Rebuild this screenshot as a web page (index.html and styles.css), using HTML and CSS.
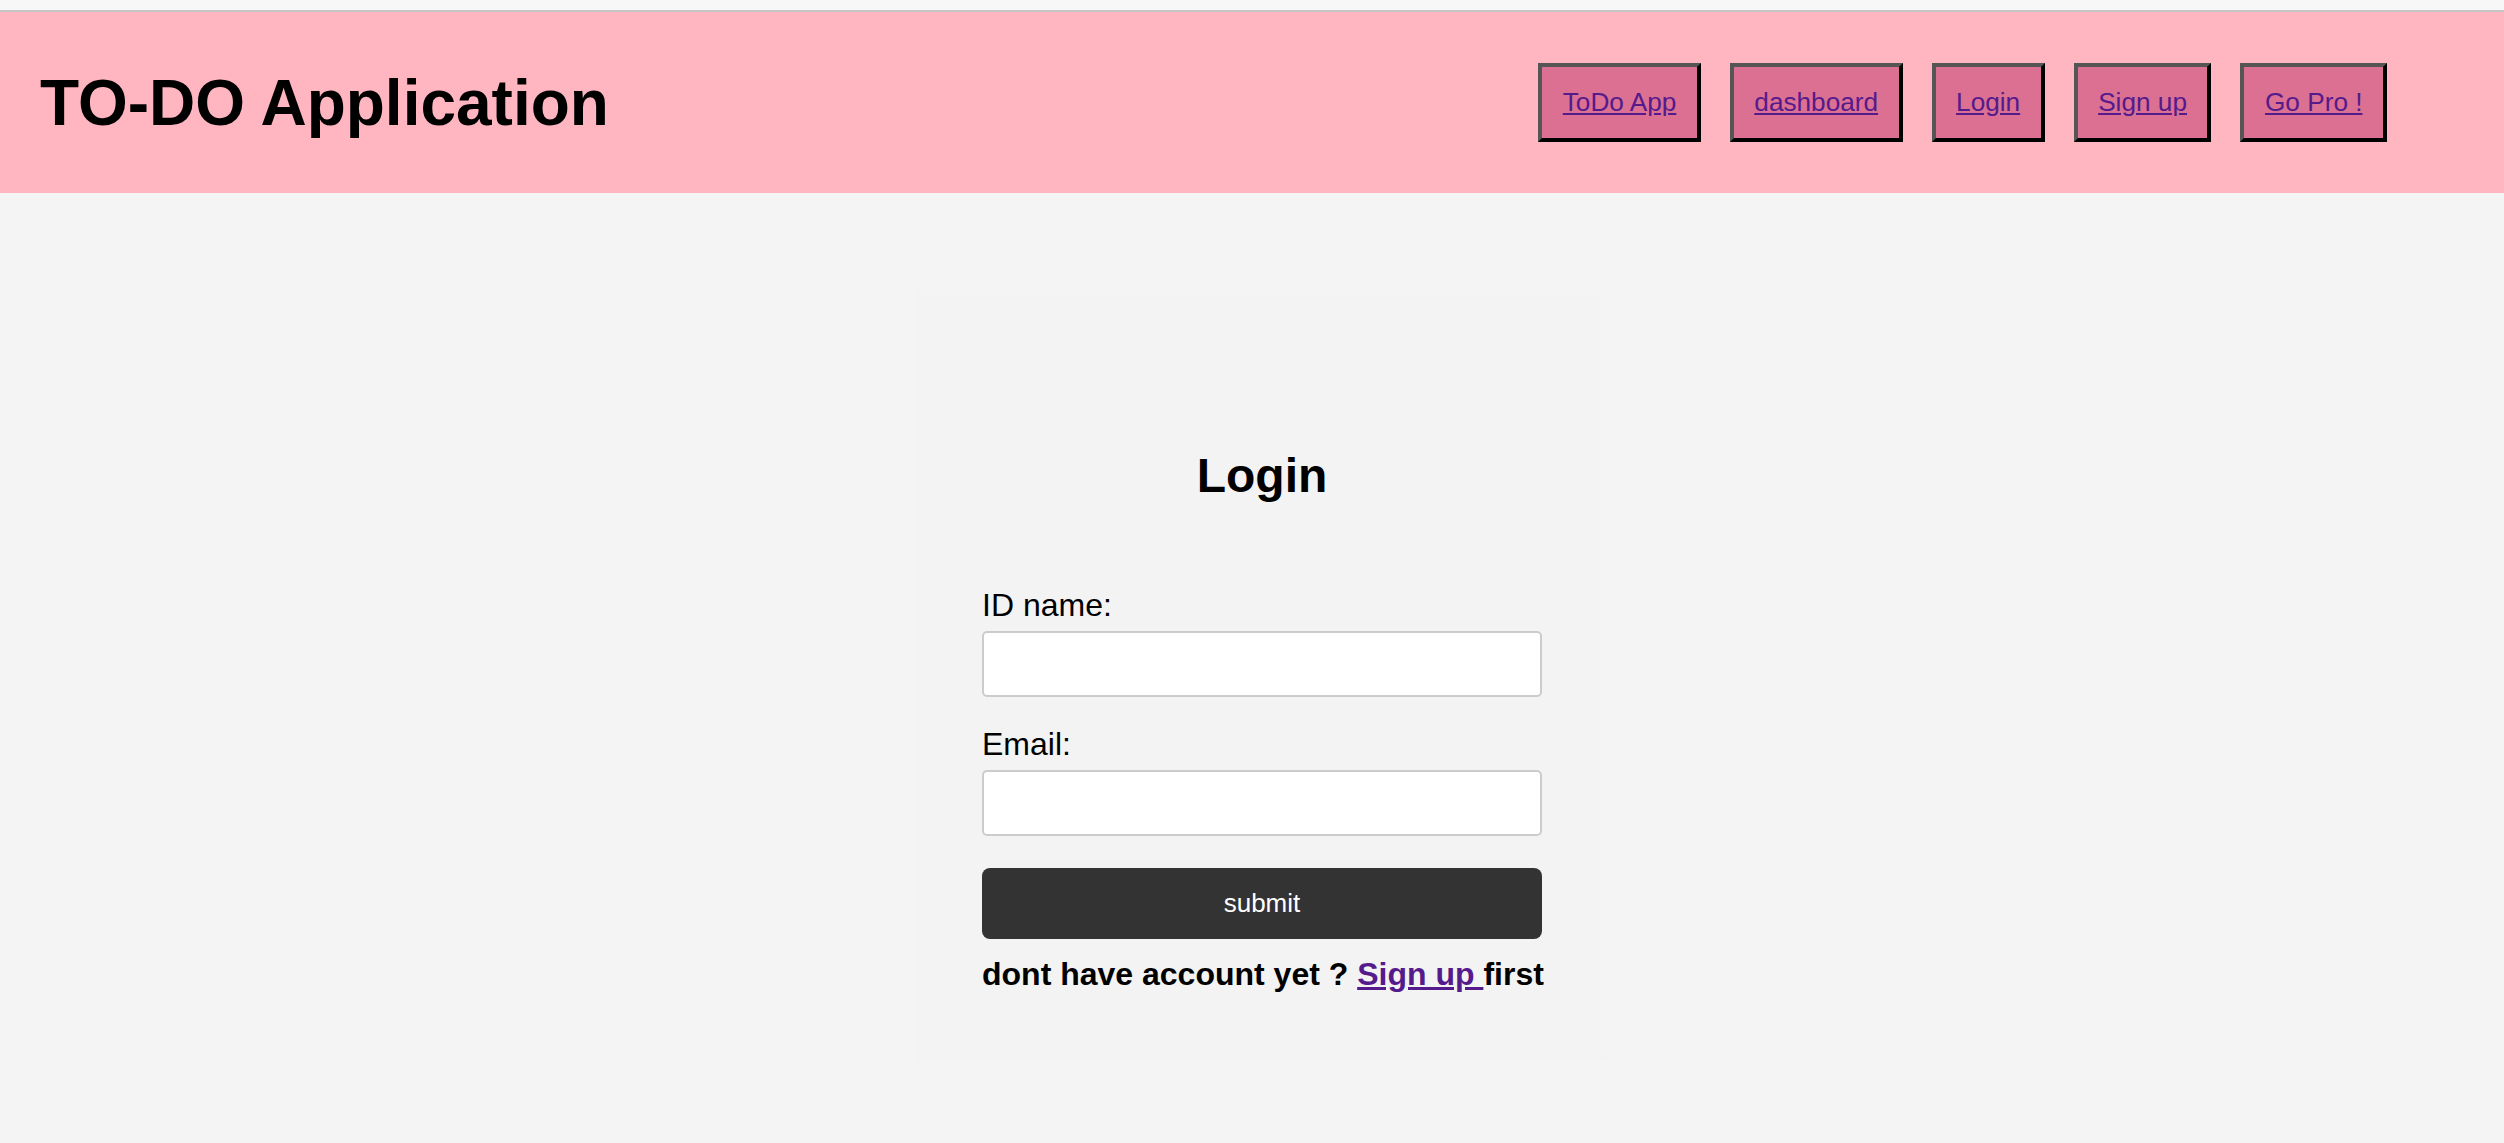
FILE: index.html
```html
<!DOCTYPE html>
<html lang="en">
<head>
<meta charset="utf-8">
<title>TO-DO Application</title>
<link rel="stylesheet" href="styles.css">
</head>
<body>
<div class="topstrip"></div>
<header class="header">
  <h1 class="brand">TO-DO Application</h1>
  <nav class="nav">
    <a class="nav-link" href="#">ToDo App</a>
    <a class="nav-link" href="#">dashboard</a>
    <a class="nav-link" href="#">Login</a>
    <a class="nav-link" href="#">Sign up</a>
    <a class="nav-link" href="#">Go Pro !</a>
  </nav>
</header>
<main class="main">
  <form class="card">
    <h2 class="card-title">Login</h2>
    <label class="label label-first" for="idname">ID name:</label>
    <input class="field" id="idname" type="text">
    <label class="label" for="email">Email:</label>
    <input class="field" id="email" type="email">
    <button class="submit" type="button">submit</button>
    <p class="note">dont have account yet ? <a class="note-link" href="#">Sign up </a>first</p>
  </form>
</main>
</body>
</html>
```

FILE: styles.css
```css
html, body {
  margin: 0;
  padding: 0;
}
body {
  background: #f4f4f4;
  font-family: "Liberation Sans", Arial, sans-serif;
  color: #000;
  min-height: 1143px;
}
.topstrip {
  height: 10px;
  background: #f7f7f7;
  border-bottom: 2px solid #c6c6c6;
}
.header {
  height: 181px;
  background: #ffb6c1;
  display: flex;
  align-items: center;
  justify-content: space-between;
  padding: 0 117px 0 40px;
}
.brand {
  margin: 0;
  font-size: 64px;
  font-weight: bold;
  line-height: 74px;
}
.nav {
  display: flex;
  gap: 29px;
  align-items: center;
}
.nav-link {
  display: block;
  background: #db7093;
  color: #551a8b;
  font-size: 26.2px;
  line-height: 31px;
  padding: 20px 20.5px;
  border-style: solid;
  border-width: 4px;
  border-color: #555 #000 #000 #555;
}
.main {
  display: flex;
  padding: 97px 0 0 918px;
}
.card {
  height: 770px;
  box-sizing: border-box;
  width: 688px;
  padding: 0 64px;
  background: #f3f3f3;
  box-shadow: 0 0 3px rgba(0, 0, 0, 0.02);
  display: flex;
  flex-direction: column;
}
.card-title {
  margin: 158px 0 0;
  text-align: center;
  font-size: 48px;
  line-height: 55px;
  font-weight: bold;
}
.label {
  font-size: 32px;
  line-height: 37px;
  margin-top: 29px;
}
.label-first {
  margin-top: 84px;
}
.field {
  margin-top: 7px;
  height: 66px;
  box-sizing: border-box;
  border: 2px solid #cccccc;
  border-radius: 5px;
  background: #fff;
  padding: 0 12px;
  font-size: 26px;
  font-family: inherit;
}
.field + .label {
  margin-top: 29px;
}
.submit {
  margin-top: 32px;
  height: 71px;
  border: 0;
  border-radius: 8px;
  background: #333333;
  color: #fff;
  font-family: "Liberation Sans", Arial, sans-serif;
  font-size: 26px;
}
.note {
  margin: 17px 0 0;
  font-size: 32px;
  line-height: 37px;
  font-weight: bold;
  white-space: nowrap;
}
.note-link {
  color: #551a8b;
}
```
